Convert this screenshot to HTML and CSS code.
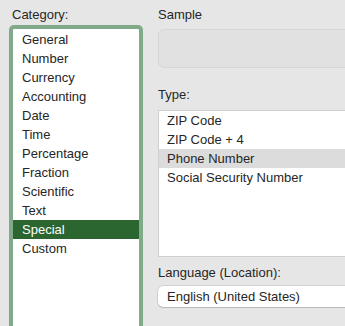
FILE: index.html
```html
<!DOCTYPE html>
<html>
<head>
<meta charset="utf-8">
<link rel="stylesheet" href="styles.css">
</head>
<body>
<div class="pane">
  <div class="left">
    <div class="label">Category:</div>
    <div class="catlist">
      <div class="row">General</div>
      <div class="row">Number</div>
      <div class="row">Currency</div>
      <div class="row">Accounting</div>
      <div class="row">Date</div>
      <div class="row">Time</div>
      <div class="row">Percentage</div>
      <div class="row">Fraction</div>
      <div class="row">Scientific</div>
      <div class="row">Text</div>
      <div class="row sel">Special</div>
      <div class="row">Custom</div>
    </div>
  </div>
  <div class="right">
    <div class="label">Sample</div>
    <div class="sample"></div>
    <div class="label type-label">Type:</div>
    <div class="typelist">
      <div class="row">ZIP Code</div>
      <div class="row">ZIP Code + 4</div>
      <div class="row hl">Phone Number</div>
      <div class="row">Social Security Number</div>
    </div>
    <div class="label lang-label">Language (Location):</div>
    <div class="select">English (United States)</div>
  </div>
</div>
</body>
</html>
```

FILE: styles.css
```css
html, body {
  margin: 0;
  padding: 0;
  background: #e6e6e6;
  overflow: hidden;
}
body {
  width: 345px;
  height: 326px;
  font-family: "Liberation Sans", Arial, sans-serif;
  font-size: 13px;
  color: #262626;
}
.pane {
  display: flex;
  align-items: flex-start;
  padding-top: 7px;
  height: 326px;
  box-sizing: border-box;
  overflow: hidden;
}
.left {
  margin-left: 9px;
  width: 134px;
  flex: none;
}
.label {
  height: 16px;
  line-height: 16px;
  padding-left: 3px;
  white-space: nowrap;
}
.catlist {
  margin-top: 2px;
  border: 4px solid #80aa88;
  border-radius: 5px;
  background: #fff;
  height: 340px;
  box-sizing: border-box;
  padding-top: 1px;
}
.row {
  height: 19px;
  line-height: 19px;
  padding-left: 9px;
  white-space: nowrap;
}
.row.sel {
  background: #2b6530;
  color: #fff;
}
.right {
  margin-left: 15px;
  flex: 1;
  min-width: 0;
}
.right .label {
  padding-left: 0;
}
.sample {
  margin-top: 6px;
  height: 39px;
  margin-right: -20px;
  background: #e1e1e1;
  border: 1px solid #d6d6d6;
  border-radius: 6px;
  box-sizing: border-box;
}
.type-label {
  margin-top: 19px;
}
.typelist {
  margin-top: 7px;
  margin-right: -20px;
  height: 147px;
  background: #fff;
  border: 1px solid #cfcfcf;
  box-sizing: border-box;
  padding-top: 0;
}
.typelist .row {
  padding-left: 8px;
}
.row.hl {
  background: #dcdcdc;
}
.lang-label {
  margin-top: 8px;
}
.select {
  margin-top: 5px;
  margin-right: -20px;
  height: 21px;
  line-height: 21px;
  background: #fff;
  border-radius: 5px;
  box-shadow: 0 0 0 0.5px rgba(0,0,0,0.18), 0 1px 1px rgba(0,0,0,0.12);
  padding-left: 9px;
}
```
